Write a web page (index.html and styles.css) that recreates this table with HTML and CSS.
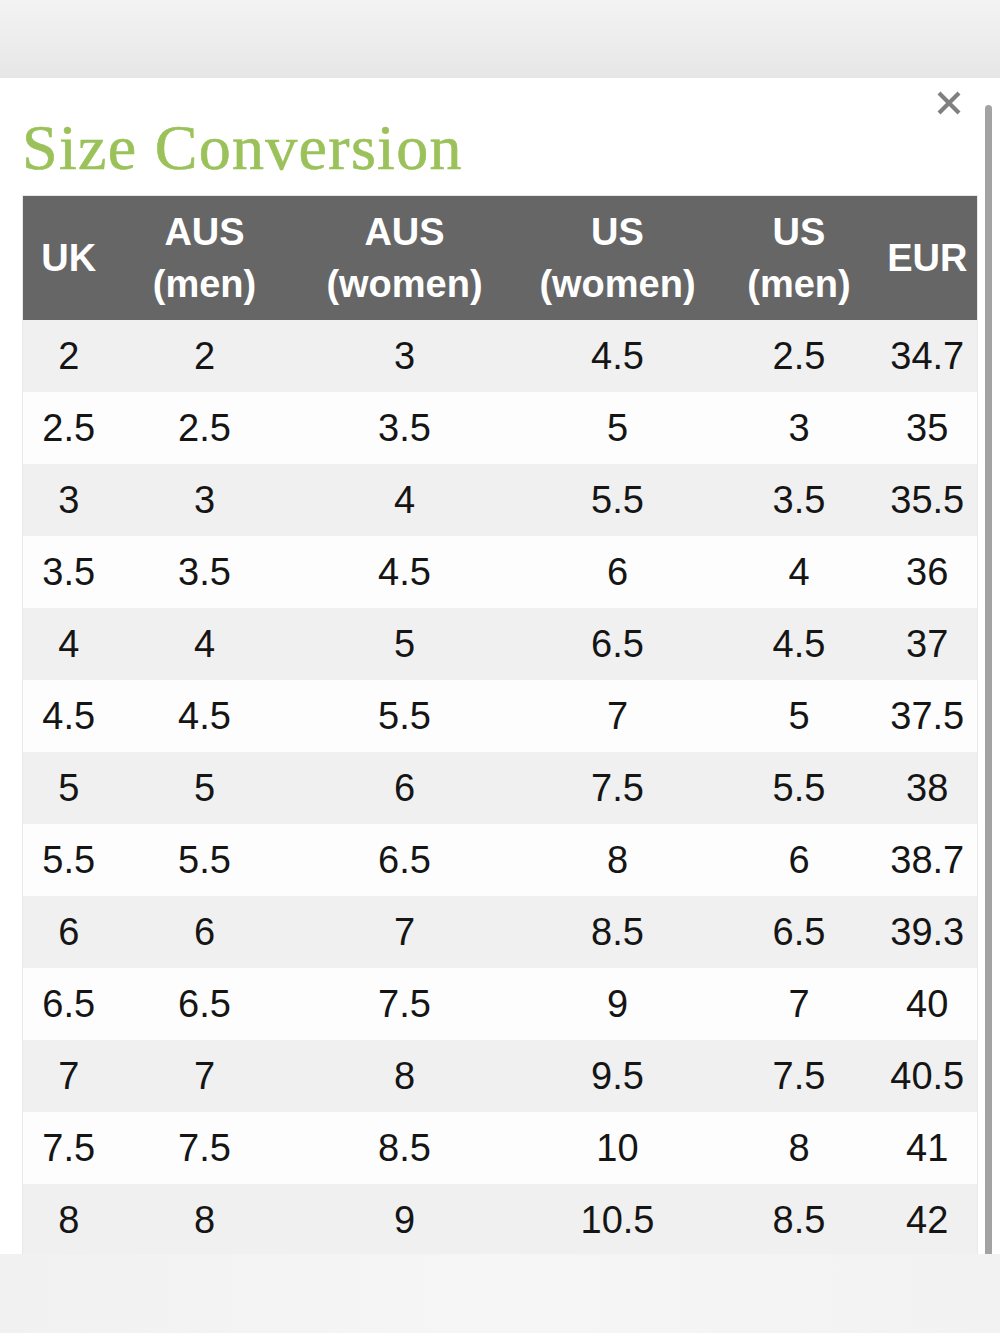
FILE: index.html
```html
<!DOCTYPE html>
<html lang="en">
<head>
<meta charset="utf-8">
<title>Size Conversion</title>
<link rel="stylesheet" href="styles.css">
</head>
<body>
<div class="band band-top"></div>
<div class="modal">
  <button class="close" aria-label="Close">
    <svg width="26" height="26" viewBox="0 0 26 26"><path d="M3 3 L23 23 M23 3 L3 23" stroke="#808080" stroke-width="4.2" stroke-linecap="butt" fill="none"/></svg>
  </button>
  <div class="scrollbar"></div>
  <h1 class="title">Size Conversion</h1>
  <table class="sizes">
    <colgroup>
      <col class="c1"><col class="c2"><col class="c3"><col class="c4"><col class="c5"><col class="c6">
    </colgroup>
    <thead>
      <tr><th>UK</th><th>AUS<br>(men)</th><th>AUS<br>(women)</th><th>US<br>(women)</th><th>US<br>(men)</th><th>EUR</th></tr>
    </thead>
    <tbody>
      <tr><td>2</td><td>2</td><td>3</td><td>4.5</td><td>2.5</td><td>34.7</td></tr>
      <tr><td>2.5</td><td>2.5</td><td>3.5</td><td>5</td><td>3</td><td>35</td></tr>
      <tr><td>3</td><td>3</td><td>4</td><td>5.5</td><td>3.5</td><td>35.5</td></tr>
      <tr><td>3.5</td><td>3.5</td><td>4.5</td><td>6</td><td>4</td><td>36</td></tr>
      <tr><td>4</td><td>4</td><td>5</td><td>6.5</td><td>4.5</td><td>37</td></tr>
      <tr><td>4.5</td><td>4.5</td><td>5.5</td><td>7</td><td>5</td><td>37.5</td></tr>
      <tr><td>5</td><td>5</td><td>6</td><td>7.5</td><td>5.5</td><td>38</td></tr>
      <tr><td>5.5</td><td>5.5</td><td>6.5</td><td>8</td><td>6</td><td>38.7</td></tr>
      <tr><td>6</td><td>6</td><td>7</td><td>8.5</td><td>6.5</td><td>39.3</td></tr>
      <tr><td>6.5</td><td>6.5</td><td>7.5</td><td>9</td><td>7</td><td>40</td></tr>
      <tr><td>7</td><td>7</td><td>8</td><td>9.5</td><td>7.5</td><td>40.5</td></tr>
      <tr><td>7.5</td><td>7.5</td><td>8.5</td><td>10</td><td>8</td><td>41</td></tr>
      <tr><td>8</td><td>8</td><td>9</td><td>10.5</td><td>8.5</td><td>42</td></tr>
    </tbody>
  </table>
</div>
<div class="band band-bottom"></div>
</body>
</html>
```
FILE: styles.css
```css
html, body {
  margin: 0;
  padding: 0;
  background: #f3f3f3;
}
body {
  width: 1000px;
  height: 1333px;
  overflow: hidden;
  font-family: "Liberation Sans", Arial, sans-serif;
}
.band {
  width: 100%;
}
.band-top {
  height: 78px;
  background: linear-gradient(180deg, #f3f3f3 0%, #ececec 60%, #e6e6e6 100%);
}
.band-bottom {
  height: 79px;
  background: linear-gradient(90deg, #f1f1f1 0%, #f6f6f6 50%, #f2f2f2 100%);
}
.modal {
  position: relative;
  height: 1176px;
  overflow: hidden;
  background: #ffffff;
  padding: 38px 0 0 22px;
  box-sizing: border-box;
}
.close {
  position: absolute;
  top: 12px;
  left: 936px;
  width: 26px;
  height: 26px;
  padding: 0;
  border: 0;
  background: transparent;
  line-height: 0;
}
.scrollbar {
  position: absolute;
  top: 27px;
  left: 985px;
  width: 7px;
  height: 1160px;
  border-radius: 4px;
  background: #a3a3a3;
}
.title {
  margin: 0 0 15px 0;
  font-family: "Liberation Serif", "Times New Roman", serif;
  font-weight: normal;
  font-size: 64px;
  line-height: 64px;
  letter-spacing: 1.3px;
  color: #9bc25a;
  -webkit-text-stroke: 0.6px #9bc25a;
}
.sizes {
  width: 955px;
  table-layout: fixed;
  border-collapse: collapse;
  border: 1px solid #e9e9e9;
}
.c1 { width: 92px; }
.c2 { width: 180px; }
.c3 { width: 220px; }
.c4 { width: 206px; }
.c5 { width: 157px; }
.c6 { width: 100px; }
.sizes th {
  background: #666666;
  color: #ffffff;
  font-weight: bold;
  font-size: 38px;
  line-height: 52px;
  height: 124px;
  padding: 0;
  text-align: center;
  vertical-align: middle;
}
.sizes td {
  height: 72px;
  padding: 0;
  font-size: 38px;
  color: #151515;
  text-align: center;
  vertical-align: middle;
}
.sizes tbody tr:nth-child(odd) td {
  background: #f0f0f0;
}
.sizes tbody tr:nth-child(even) td {
  background: #fdfdfd;
}
```
